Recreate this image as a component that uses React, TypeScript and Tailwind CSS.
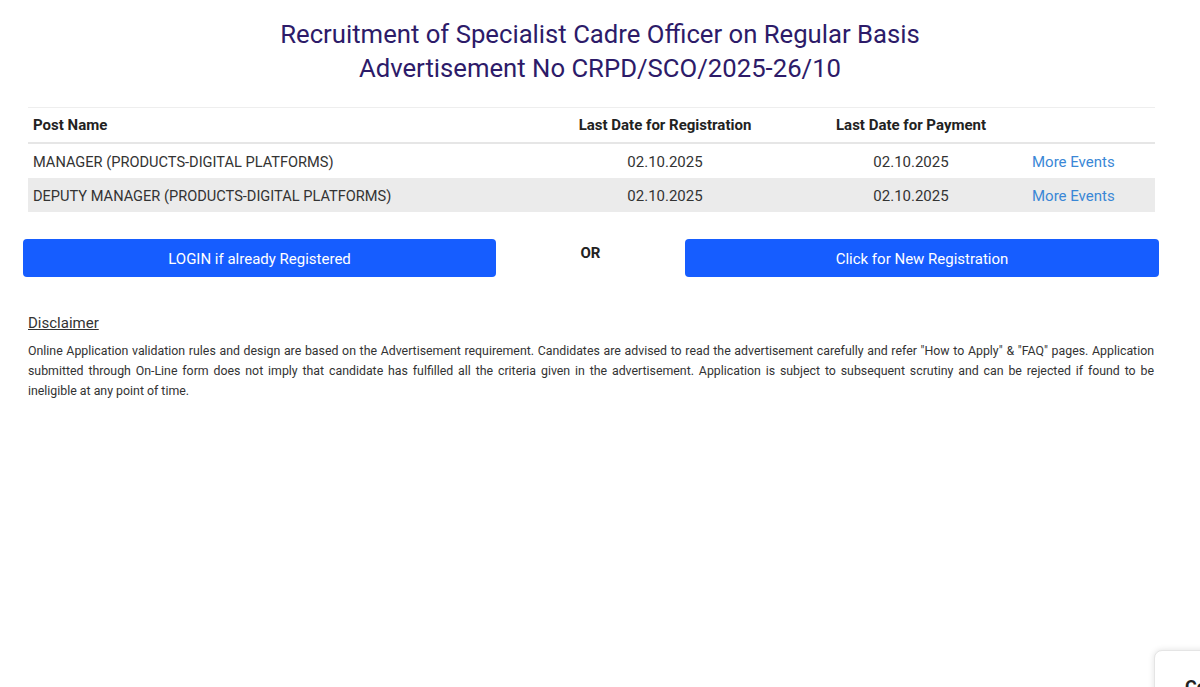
import React from "react";

const rows = [
  { name: "MANAGER (PRODUCTS-DIGITAL PLATFORMS)", reg: "02.10.2025", pay: "02.10.2025", bg: "bg-white" },
  { name: "DEPUTY MANAGER (PRODUCTS-DIGITAL PLATFORMS)", reg: "02.10.2025", pay: "02.10.2025", bg: "bg-[#ebebeb]" },
];

export default function App() {
  return (
    <div
      className="relative w-[1200px] h-[687px] overflow-hidden bg-white text-[#333]"
      style={{ fontFamily: "Roboto, 'Liberation Sans', sans-serif" }}
    >
      <div className="pt-[17px] text-center text-[#2d1b69] text-[25.7px] leading-[34px]">
        <div>Recruitment of Specialist Cadre Officer on Regular Basis</div>
        <div>Advertisement No CRPD/SCO/2025-26/10</div>
      </div>

      <div className="ml-[28px] w-[1127px] mt-[22px] border-t border-[#eeeeee]">
        <div className="flex h-[36px] items-center text-[15px] font-bold text-[#222] border-b-2 border-[#e6e6e6]">
          <div className="w-[512px] pl-[5px]">Post Name</div>
          <div className="w-[250px] text-center">Last Date for Registration</div>
          <div className="w-[242px] text-center">Last Date for Payment</div>
          <div className="flex-1"></div>
        </div>
        {rows.map((r) => (
          <div key={r.name} className={`flex h-[34px] items-center pt-[3px] text-[15px] ${r.bg}`}>
            <div className="w-[512px] pl-[5px] text-[14.6px]">{r.name}</div>
            <div className="w-[250px] text-center">{r.reg}</div>
            <div className="w-[242px] text-center">{r.pay}</div>
            <div className="flex-1 text-[#3a87d6]">More Events</div>
          </div>
        ))}
      </div>

      <div className="flex items-start ml-[23px] mt-[27px]">
        <button className="w-[473px] h-[38px] rounded-[4px] bg-[#165dff] text-white text-[15px] pt-[2px]">
          LOGIN if already Registered
        </button>
        <div className="w-[189px] text-center font-bold text-[15px] text-[#222] pt-[3px]">OR</div>
        <button className="w-[474px] h-[38px] rounded-[4px] bg-[#165dff] text-white text-[15px] pt-[2px]">
          Click for New Registration
        </button>
      </div>

      <div className="ml-[28px] w-[1126px] mt-[35px]">
        <div className="text-[15px] underline text-[#333] leading-[22px]">Disclaimer</div>
        <div className="mt-[7px] text-[12.35px] leading-[20px] text-[#333]">
          <div className="text-justify [text-align-last:justify]">
            Online Application validation rules and design are based on the Advertisement requirement. Candidates are advised to read the advertisement carefully and refer "How to Apply" &amp; "FAQ" pages. Application
          </div>
          <div className="text-justify [text-align-last:justify]">
            submitted through On-Line form does not imply that candidate has fulfilled all the criteria given in the advertisement. Application is subject to subsequent scrutiny and can be rejected if found to be
          </div>
          <div>ineligible at any point of time.</div>
        </div>
      </div>

      <div className="absolute left-[1154px] top-[650px] w-[80px] h-[60px] rounded-[8px] border border-[#e5e5e5] bg-white shadow-[0_0_6px_rgba(0,0,0,0.12)] pl-[30px] pt-[22px] text-[18px] font-bold text-[#222]">
        Co
      </div>
    </div>
  );
}
